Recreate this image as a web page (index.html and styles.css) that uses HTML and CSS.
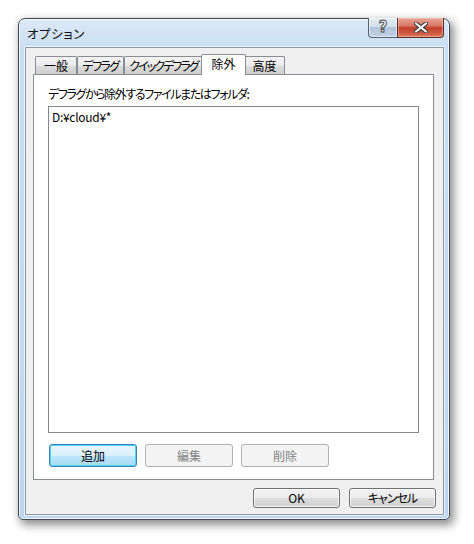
FILE: index.html
```html
<!DOCTYPE html>
<html lang="ja">
<head>
<meta charset="utf-8">
<link rel="stylesheet" href="styles.css">
</head>
<body>
<div class="window">
  <div class="titlebar">
    <span class="title">オプション</span>
    <div class="caption-buttons">
      <div class="cap-btn help"><span class="help-glyph">?</span></div>
      <div class="cap-btn close">
        <svg width="14" height="11" viewBox="0 0 14 11">
          <path d="M2 1.5 L12 9.5 M12 1.5 L2 9.5" stroke="#3d3d3d" stroke-width="4.2" stroke-linecap="round" fill="none"/>
          <path d="M2 1.5 L12 9.5 M12 1.5 L2 9.5" stroke="#ffffff" stroke-width="2.2" stroke-linecap="round" fill="none"/>
        </svg>
      </div>
    </div>
  </div>
  <div class="client">
    <div class="tabs">
      <div class="tab t1">一般</div>
      <div class="tab t2">デフラグ</div>
      <div class="tab t3">クイックデフラグ</div>
      <div class="tab t4 selected">除外</div>
      <div class="tab t5">高度</div>
    </div>
    <div class="panel">
      <div class="label">デフラグから除外するファイルまたはフォルダ:</div>
      <div class="listbox">
        <div class="item">D:¥cloud¥*</div>
      </div>
      <div class="panel-buttons">
        <div class="btn default">追加</div>
        <div class="btn disabled">編集</div>
        <div class="btn disabled">削除</div>
      </div>
    </div>
    <div class="footer">
      <div class="btn normal latin">OK</div>
      <div class="btn normal">キャンセル</div>
    </div>
  </div>
</div>
</body>
</html>
```
FILE: styles.css
```css
html, body {
  margin: 0;
  padding: 0;
  background: #ffffff;
}
body {
  width: 474px;
  height: 544px;
  overflow: hidden;
  font-family: "Noto Sans CJK JP", "Noto Sans", sans-serif;
  font-size: 12px;
  font-feature-settings: "palt";
  color: #000;
}
.window {
  box-sizing: border-box;
  margin: 18px 0 0 18px;
  width: 432px;
  height: 502px;
  border: 1px solid #3f4852;
  border-radius: 7px 7px 5px 5px;
  background: linear-gradient(180deg, #dce9f7 0%, #c9ddf3 6%, #c4daf2 60%, #bcd5f0 100%);
  box-shadow: inset 0 0 0 1px rgba(255,255,255,0.75), 3px 4px 10px 1px rgba(0,0,0,0.45);
  padding: 0 5px 4px 6px;
  display: flex;
  flex-direction: column;
}
.titlebar {
  height: 28px;
  display: flex;
  align-items: center;
  flex: none;
}
.title {
  padding-left: 2px;
  font-size: 12.5px;
  letter-spacing: 0.6px;
  color: #111;
  flex: 1;
  line-height: 16px;
  margin-top: 1px;
}
.caption-buttons {
  align-self: flex-start;
  margin-top: -1px;
  display: flex;
}
.cap-btn {
  box-sizing: border-box;
  height: 20px;
  display: flex;
  align-items: center;
  justify-content: center;
  border: 1px solid #56616e;
  border-top: none;
}
.help {
  width: 29px;
  border-radius: 0 0 0 4px;
  border-right: none;
  background: linear-gradient(180deg, #e4edf6 0%, #d2dfec 45%, #b3c5d9 50%, #c1d2e4 100%);
  box-shadow: inset 0 0 0 1px rgba(255,255,255,0.5);
}
.help-glyph {
  font-family: "DejaVu Sans", sans-serif;
  font-weight: bold;
  font-size: 15px;
  line-height: 15px;
  color: #ffffff;
  -webkit-text-stroke: 1px #4a4f57;
  margin-top: -1px;
}
.close {
  width: 47px;
  border-radius: 0 0 4px 0;
  border-color: #5a2a24;
  background: linear-gradient(180deg, #e8a597 0%, #d97a67 40%, #c2402a 52%, #cf5a42 80%, #e07a5f 100%);
  box-shadow: inset 0 0 0 1px rgba(255,220,210,0.45);
}
.client {
  flex: 1;
  box-sizing: border-box;
  border: 1px solid #8b97a5;
  box-shadow: 0 0 0 1px rgba(255,255,255,0.7);
  background: #f0f0f0;
  padding: 6px 9px 0 7px;
  display: flex;
  flex-direction: column;
}
.tabs {
  height: 20px;
  display: flex;
  align-items: flex-end;
  padding-left: 2px;
  flex: none;
}
.tab {
  box-sizing: border-box;
  height: 18px;
  border: 1px solid #898c95;
  border-bottom: none;
  border-radius: 2px 2px 0 0;
  background: linear-gradient(180deg, #f3f3f3 0%, #ebebeb 50%, #dddddd 51%, #cfcfcf 100%);
  text-align: center;
  line-height: 17px;
  white-space: nowrap;
  letter-spacing: -1.6px;
  overflow: hidden;
}
.t1 { width: 42px; letter-spacing: 0; }
.t2 { width: 47px; }
.t3 { width: 79px; letter-spacing: -2px; }
.t4 { width: 41px; }
.t5 { width: 41px; letter-spacing: 0; }
.tab.selected {
  width: 45px;
  height: 21px;
  margin: 0 -2px -1px -2px;
  background: #ffffff;
  position: relative;
  z-index: 1;
  line-height: 18px;
  padding-bottom: 2px;
  letter-spacing: 0;
}
.panel {
  flex: none;
  height: 406px;
  box-sizing: border-box;
  border: 1px solid #898c95;
  background: #ffffff;
  padding: 11px 14px 12px 14px;
  display: flex;
  flex-direction: column;
}
.label {
  line-height: 16px;
  margin-bottom: 4px;
  letter-spacing: -1.4px;
}
.listbox {
  flex: 1;
  border: 1px solid #828790;
  background: #fff;
  padding: 2px 3px;
}
.item {
  line-height: 15px;
  letter-spacing: -0.3px;
}
.panel-buttons {
  display: flex;
  gap: 8px;
  margin-top: 11px;
  padding-left: 1px;
}
.btn {
  box-sizing: border-box;
  width: 88px;
  height: 23px;
  border-radius: 3px;
  display: flex;
  align-items: center;
  justify-content: center;
  line-height: 16px;
}
.btn.default {
  border: 1px solid #3c7fb1;
  background: linear-gradient(180deg, #eaf6fd 0%, #d9f0fc 50%, #bee6fd 51%, #a7d9f5 100%);
  box-shadow: inset 0 0 0 1px #48d8fb;
}
.btn.disabled {
  border: 1px solid #adb2b5;
  background: #f4f4f4;
  color: #838383;
}
.footer {
  flex: 1;
  display: flex;
  justify-content: flex-end;
  align-items: flex-start;
  gap: 9px;
  padding-top: 8px;
  margin-right: -2px;
}
.btn.normal {
  width: 87px;
  height: 20px;
  border: 1px solid #707070;
  background: linear-gradient(180deg, #f2f2f2 0%, #ebebeb 50%, #dddddd 51%, #cfcfcf 100%);
  box-shadow: inset 0 0 0 1px rgba(255,255,255,0.8);
  letter-spacing: -1px;
}
.btn.latin {
  letter-spacing: 0;
}
```
